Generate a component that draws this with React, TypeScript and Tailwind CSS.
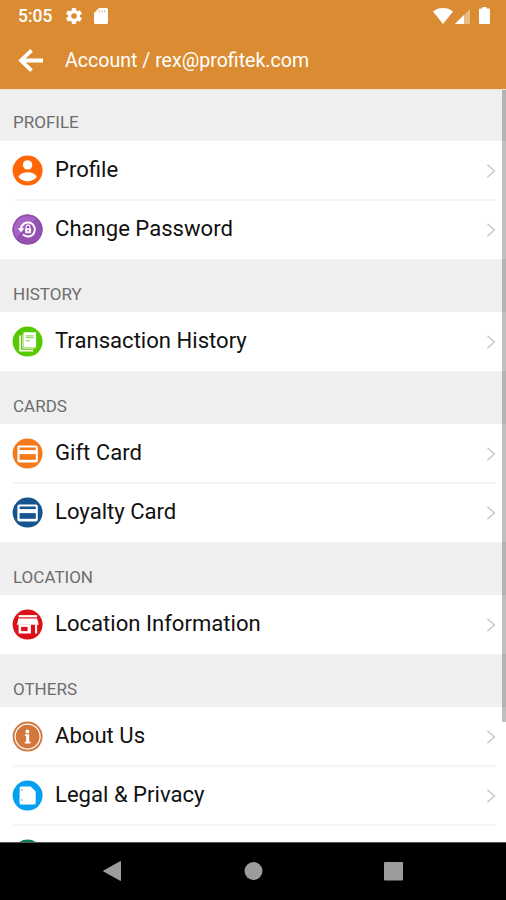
import React from 'react';

interface Item {
  label: string;
  icon: React.ReactNode;
}

interface Section {
  title: string;
  items: Item[];
}

interface BadgeProps {
  color: string;
  children?: React.ReactNode;
}

const Badge: React.FC<BadgeProps> = ({ color, children }) => (
  <svg viewBox="0.4 0.4 30 30" className="block h-[30px] w-[30px] shrink-0 overflow-visible">
    <circle cx="15" cy="15" r="15" fill={color} />
    {children}
  </svg>
);

const ProfileIcon = () => (
  <Badge color="#ff6606">
    <circle cx="15" cy="9.3" r="4.7" fill="#fff" />
    <path d="M5.7 21.2C7.8 18 11 16.7 15 16.7s7.2 1.3 9.3 4.5C22.3 24 19 25.8 15 25.8S7.7 24 5.7 21.2Z" fill="#fff" />
  </Badge>
);

const PasswordIcon = () => (
  <Badge color="#9450b2">
    <path d="M15 0A15 15 0 0 0 3 24L24 3A15 15 0 0 0 15 0Z" fill="#a763c6" />
    <circle cx="15" cy="15" r="14.3" fill="none" stroke="#8b50a4" strokeWidth="1.2" />
    <path d="M8.3 14.4a7 7 0 1 1 2 5.4" fill="none" stroke="#fff" strokeWidth="2" />
    <path d="M5 13.7h6.8l-3.4 4Z" fill="#fff" />
    <path d="M13.6 14v-1.6a1.9 1.9 0 0 1 3.8 0V14" fill="none" stroke="#fff" strokeWidth="1.1" />
    <rect x="12.5" y="13.7" width="6" height="5" rx="0.7" fill="#fff" />
    <circle cx="15.5" cy="16" r="0.9" fill="#8d4bac" />
  </Badge>
);

const HistoryIcon = () => (
  <Badge color="#58c900">
    <path d="M7.5 9v15h13" fill="none" stroke="#fff" strokeWidth="1.7" />
    <path d="M9.8 8v13.7h12.4" fill="none" stroke="#c6efa5" strokeWidth="1" />
    <rect x="10.8" y="5.7" width="12.7" height="15.3" rx="0.7" fill="#fff" />
    <path d="M13 9.3h8M13 11h8M13 14.2h4" stroke="#58c900" strokeWidth="0.8" />
  </Badge>
);

const CardIcon: React.FC<{ color: string }> = ({ color }) => (
  <Badge color={color}>
    <rect x="4.8" y="6.8" width="20.4" height="17" rx="2" fill="#fff" />
    <rect x="7" y="8.9" width="16.2" height="2.6" fill={color} />
    <rect x="7" y="15.5" width="16.2" height="5.7" fill={color} />
  </Badge>
);

const StoreIcon = () => (
  <Badge color="#db1018">
    <rect x="6" y="5.5" width="18.5" height="2.2" fill="#fff" />
    <path d="M5.8 8.8h18.7l1.7 6.4H4.3Z" fill="#fff" />
    <path d="M6 15h12.3v9H6ZM22.5 15h2v9h-2Z" fill="#fff" />
    <path d="M8.5 17.3h6.5v4.2H8.5Z" fill="#db1018" />
  </Badge>
);

const AboutIcon = () => (
  <Badge color="#d4773f">
    <circle cx="15" cy="15" r="12.5" fill="none" stroke="#fff" strokeWidth="1.2" />
    <circle cx="14.8" cy="9.9" r="1.9" fill="#fff" />
    <path d="M12.3 12.7h4.3v7.4h1.3v1.7h-5.7v-1.7h1.3v-5.7h-1.2Z" fill="#fff" />
  </Badge>
);

const LegalIcon = () => (
  <Badge color="#079ff0">
    <path d="M8.5 6h9.6l5 5v11.3a1.5 1.5 0 0 1-1.5 1.5H8.5A1.5 1.5 0 0 1 7 22.3V7.5A1.5 1.5 0 0 1 8.5 6Z" fill="#fff" />
    <path d="M8.3 9.3h1.5M8.3 19.4h1.5" stroke="#079ff0" strokeWidth="1" />
  </Badge>
);

const sections: Section[] = [
  {
    title: 'PROFILE',
    items: [
      { label: 'Profile', icon: <ProfileIcon /> },
      { label: 'Change Password', icon: <PasswordIcon /> },
    ],
  },
  {
    title: 'HISTORY',
    items: [{ label: 'Transaction History', icon: <HistoryIcon /> }],
  },
  {
    title: 'CARDS',
    items: [
      { label: 'Gift Card', icon: <CardIcon color="#f57a1c" /> },
      { label: 'Loyalty Card', icon: <CardIcon color="#145590" /> },
    ],
  },
  {
    title: 'LOCATION',
    items: [{ label: 'Location Information', icon: <StoreIcon /> }],
  },
  {
    title: 'OTHERS',
    items: [
      { label: 'About Us', icon: <AboutIcon /> },
      { label: 'Legal & Privacy', icon: <LegalIcon /> },
      { label: '', icon: <Badge color="#08804f" /> },
    ],
  },
];

const StatusBar = () => (
  <div className="flex h-8 items-center pl-[18px] pr-4 text-white">
    <span className="w-[48px] text-[17.5px] font-medium leading-8">5:05</span>
    <svg viewBox="2 2 20 20" className="h-4 w-4" fill="currentColor">
      <path d="M19.43 12.98c.04-.32.07-.64.07-.98s-.03-.66-.07-.98l2.11-1.65c.19-.15.24-.42.12-.64l-2-3.46c-.12-.22-.39-.3-.61-.22l-2.49 1c-.52-.4-1.08-.73-1.69-.98l-.38-2.65A.488.488 0 0 0 14 2h-4c-.25 0-.46.18-.49.42l-.38 2.65c-.61.25-1.17.59-1.69.98l-2.49-1c-.23-.09-.49 0-.61.22l-2 3.46c-.13.22-.07.49.12.64l2.11 1.65c-.04.32-.07.65-.07.98s.03.66.07.98l-2.11 1.65c-.19.15-.24.42-.12.64l2 3.46c.12.22.39.3.61.22l2.49-1c.52.4 1.08.73 1.69.98l.38 2.65c.03.24.24.42.49.42h4c.25 0 .46-.18.49-.42l.38-2.65c.61-.25 1.17-.59 1.69-.98l2.49 1c.23.09.49 0 .61-.22l2-3.46c.12-.22.07-.49-.12-.64ZM12 15.5A3.5 3.5 0 1 1 12 8.5a3.5 3.5 0 0 1 0 7Z" />
    </svg>
    <svg viewBox="0 0 14 16" className="ml-[12px] h-4 w-[14px]">
      <path d="M5 0h7.5A1.5 1.5 0 0 1 14 1.5v13a1.5 1.5 0 0 1-1.5 1.5h-11A1.5 1.5 0 0 1 0 14.5V5Z" fill="#fff" />
      <path d="M5.3 2v2.5M8 2v2.5M10.7 2v2.5" stroke="#db8c32" strokeWidth="1" opacity="0.6" />
    </svg>
    <svg viewBox="0 0 20 16" className="-mt-px ml-auto h-4 w-5">
      <path d="M0 3.4C5.5-1.1 14.5-1.1 20 3.4L10 16Z" fill="#fff" />
    </svg>
    <svg viewBox="0 0 15 15" className="ml-[2px] h-[15px] w-[15px]">
      <path d="M0 15 15 0v15Z" fill="#fff" opacity="0.4" />
      <path d="M0 15 9 6v9Z" fill="#fff" />
    </svg>
    <svg viewBox="0 0 11 17" className="-mt-px ml-[9px] h-[17px] w-[11px]">
      <path d="M3.5 0h4v1.5H10a1 1 0 0 1 1 1V16a1 1 0 0 1-1 1H1a1 1 0 0 1-1-1V2.5a1 1 0 0 1 1-1h2.5Z" fill="#fff" />
    </svg>
  </div>
);

const AppBar = () => (
  <div className="flex h-[57px] items-center pl-[18px] text-white">
    <svg viewBox="0 0.5 25 24" className="h-6 w-[25px] overflow-visible" fill="none" stroke="currentColor" strokeWidth="3.8">
      <path d="M13.5 1.8 3 12l10.5 10.2M3 12h22" />
    </svg>
    <h1 className="ml-[22px] text-[19.57px] leading-6">Account / rex@profitek.com</h1>
  </div>
);

const Row: React.FC<{ item: Item }> = ({ item }) => (
  <div className="flex h-[59px] shrink-0 pl-[13px] pr-[10px]">
    <div className="pt-[15px]">{item.icon}</div>
    <div className="ml-3 mt-[14px] flex-1 whitespace-nowrap text-[22.1px] leading-[28px] text-[#111]">
      {item.label}
    </div>
    {item.label && (
      <svg viewBox="0.6 0 9 14" className="mt-[23px] h-[14px] w-[9px] overflow-visible" fill="none" stroke="#c7c7c7" strokeWidth="1.4">
        <path d="m1 0.7 7 6.3-7 6.3" />
      </svg>
    )}
  </div>
);

const App = () => (
  <div className="flex h-[900px] w-[506px] flex-col overflow-hidden bg-white font-['Roboto',sans-serif]">
    <header className="h-[89px] shrink-0 bg-[#db8c32]">
      <StatusBar />
      <AppBar />
    </header>

    <main className="relative flex h-[753px] shrink-0 flex-col overflow-hidden border-t border-[#f4e2d1]">
      {sections.map((section, index) => (
        <section key={section.title} className="shrink-0">
          <h2
            className={`bg-[#efefef] pl-[13px] text-[17px] leading-5 text-[#6d6d6d] ${
              index === 0 ? 'h-[51px] pt-[22px]' : 'h-[53px] pt-[25px]'
            }`}
          >
            {section.title}
          </h2>
          {section.items.map((item, i) => (
            <div key={i}>
              {i > 0 && <div className="-mb-px -mt-px ml-[13px] mr-[10px] h-[2px] bg-[#f5f5f5]" />}
              <Row item={item} />
            </div>
          ))}
        </section>
      ))}
      {/* Scrollbar */}
      <div className="absolute right-0 top-0 h-[632px] w-1 bg-black/25" />
    </main>

    <nav className="flex h-[58px] shrink-0 items-center border-t border-[#555] bg-black">
      <svg viewBox="0 0 506 57" className="h-[57px] w-[506px]" fill="#9c9c9c">
        <path d="M103.5 28 120.5 18.5v19Z" stroke="#9c9c9c" strokeWidth="1" strokeLinejoin="round" />
        <circle cx="253.5" cy="28" r="9" />
        <rect x="384" y="19" width="19" height="18.5" rx="1" />
      </svg>
    </nav>
  </div>
);

export default App;
